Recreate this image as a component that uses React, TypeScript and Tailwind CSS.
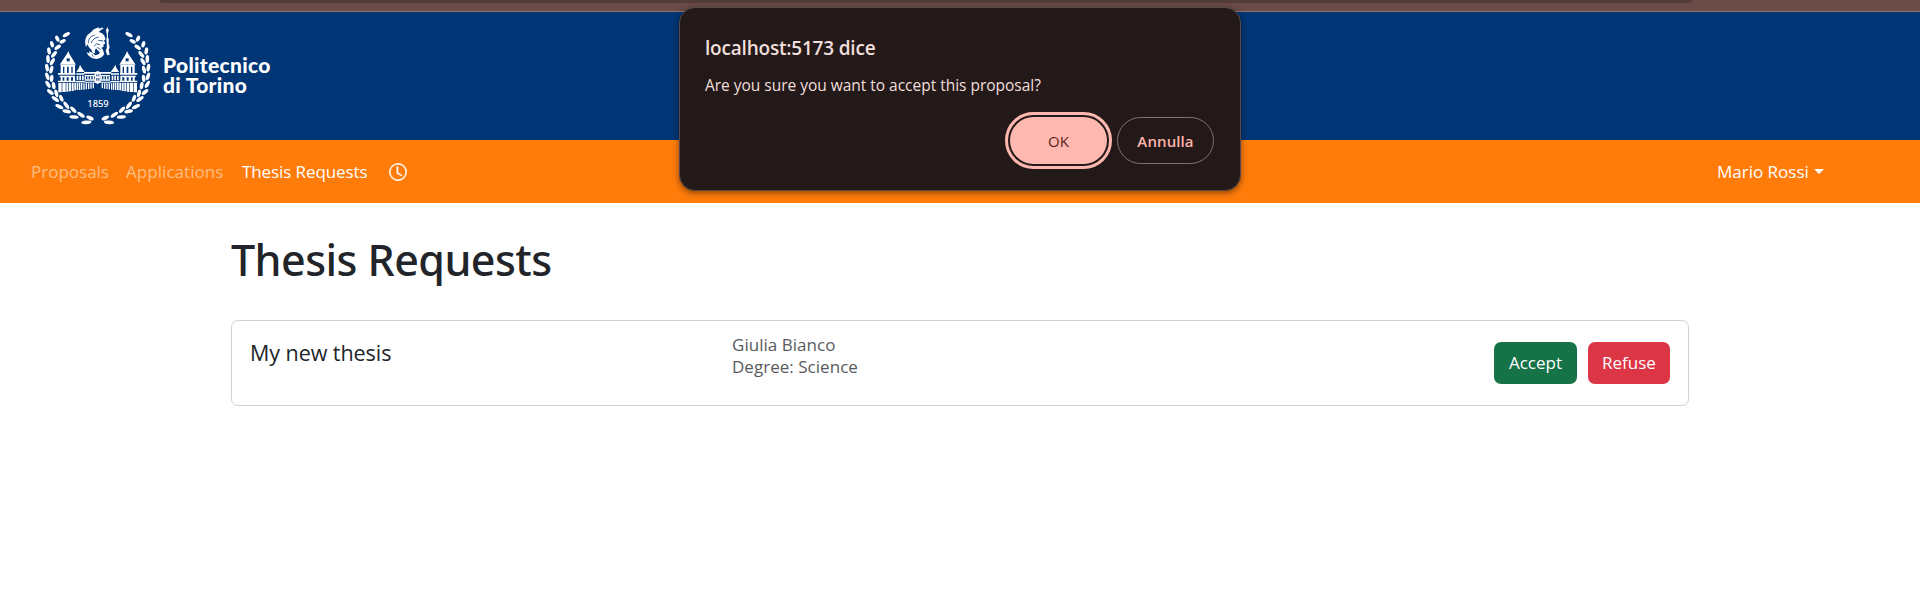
import React from "react";

type Leaf = [number, number, number, number];

// x, y, length, rotation in degrees; the right half of the wreath mirrors the left one
const leaves: Leaf[] = [
  [109, 59, 12, -30], [82, 71, 10, 65], [98, 79, 10, -28], [66, 88, 10, 75], [83, 97, 11, -35],
  [57, 108, 11, 80], [72, 118, 12, -50], [54, 132, 12, 88], [67, 140, 12, -60],
  [51, 158, 12, 80], [64, 164, 12, -75], [52, 184, 12, 72], [65, 190, 11, -85],
  [54, 208, 12, 60], [71, 212, 11, 80], [61, 231, 12, 40], [79, 235, 12, 75],
  [76, 252, 13, 35], [94, 250, 11, 68], [88, 275, 13, 25], [109, 271, 13, 55],
  [110, 289, 13, 12], [130, 284, 12, 45], [132, 306, 14, 5], [153, 299, 13, 35],
  [169, 322, 15, -5], [180, 309, 12, 25],
];

function Wreath() {
  return (
    <g>
      {leaves.map(([x, y, l, r]) => (
        <ellipse key={`${x}-${y}`} cx={x} cy={y} rx={l} ry={5.4} transform={`rotate(${r} ${x} ${y})`} />
      ))}
    </g>
  );
}

function Tower() {
  return (
    <g>
      <path d="M115 108l3 8 20 33H89l22-33z" />
      <path d="M92 150h43v5H92zM92 155h7v22h-7zM103 155h8v22h-8zM116 155h8v22h-8zM128 155h7v22h-7zM84 174h52v5H84zM89 182h46v5H89zM92 187h6v10h-6zM103 187h7v10h-7zM116 187h7v10h-7zM129 187h6v10h-6zM84 197h53v4H84z" />
      <path d="M85 203h10v29h-10zM97 203h10v28h-10zM109 203h6v27h-6zM117 203h6v26h-6zM125 203h6v25h-6zM133 203h5v23h-5zM140 203h5v22h-5zM147 203h4v22h-4zM153 203h4v21h-4z" />
      <path d="M110 130h9v9h-9z" fill="#003576" />
      <path d="M150 149l5 9 9 13h-25l8-13zM139 175h24v4h-24zM140 182h5v14h-5zM148 182h5v14h-5zM156 182h5v14h-5zM138 198h26v4h-26z" />
    </g>
  );
}

function Minerva() {
  return (
    <g>
      <path d="M168 96C163 80 166 66 175 58C181 53 185 52 188 46C193 41 200 39 208 37L206 42L214 38L222 39L213 45L206 51L215 54C222 58 226 66 226 74L222 76L226 86L221 88L220 96L214 98L219 104L221 115L212 121L209 112L203 106L198 100L194 108L196 115L188 114L184 104L178 98L172 88Z" />
      <path d="M175 84C175 72 181 64 194 60M184 84C187 74 194 68 206 66M205 76L220 78M192 94L200 86L210 90M202 97L212 104" fill="none" stroke="#003576" strokeWidth="2.4" />
      <path d="M169 112L179 115L177 108L188 114L196 121L206 118L213 109L219 108L223 118L215 127L202 132L187 130L176 122Z" />
      <path d="M186 117L190 126M200 108L203 117" fill="none" stroke="#003576" strokeWidth="2" />
      <path d="M232 36L236 46L234 55H230L228 46Z" />
      <path d="M230.500 50h3.500v62h-3.500zM229 70h7v17l3 9-3 9 3 14-7 2-5-13 4-11z" />
    </g>
  );
}

function Emblem() {
  return (
    <svg viewBox="0 0 390 360" className="h-[120px] w-[130px] shrink-0" fill="#fff">
      <Wreath />
      <Tower />
      <g transform="matrix(-1 0 0 1 406 0)">
        <Wreath />
        <Tower />
      </g>
      <path d="M162 171h82v5h-82zM164 180h76v4h-76zM164 193h76v4h-76zM163 200h80v3h-80z" />
      <path d="M164 184h4v9h-4zM172 184h4v9h-4zM180 184h4v9h-4zM188 184h4v9h-4zM212 184h4v9h-4zM220 184h4v9h-4zM228 184h4v9h-4zM236 184h4v9h-4z" />
      <path d="M160 205h4v19h-4zM167 205h4v18h-4zM174 205h4v17h-4zM181 205h4v16h-4zM188 205h4v15h-4zM215 205h4v15h-4zM222 205h4v16h-4zM229 205h4v17h-4zM236 205h4v18h-4zM243 205h4v19h-4z" />
      <path d="M194 172l9-4 9 4v28l-9 8-9-8z" />
      <path d="M199 178h3v6h-3zM205 178h3v6h-3zM199 189h3v8h-3zM205 189h3v8h-3z" fill="#003576" />
      <Minerva />
      <text x="204" y="276" textAnchor="middle" fontSize="28" className="font-['Noto_Sans'] font-medium">1859</text>
    </svg>
  );
}

function ClockIcon() {
  return (
    <svg viewBox="0 0 16 16" className="h-[18px] w-[18px]" fill="#fff" stroke="#fff" strokeWidth=".5">
      <path d="M8 3.5a.5.5 0 0 0-1 0V9a.5.5 0 0 0 .252.434l3.5 2a.5.5 0 0 0 .496-.868L8 8.71z" />
      <path d="M8 15.7A7.7 7.7 0 1 0 8 .3a7.7 7.7 0 0 0 0 15.400m6.900-7.700A6.900 6.900 0 1 1 1.100 8a6.900 6.900 0 0 1 13.800 0" />
    </svg>
  );
}

function ConfirmDialog() {
  return (
    <div role="dialog" className="absolute top-[7px] left-[679px] flex h-[184px] w-[562px] flex-col rounded-[16px] border border-[#594a47] bg-[#231919] pr-[26px] pl-[25px] text-[#f1dfdc] shadow-[0_2px_6px_rgba(0,0,0,0.45)]">
      <h2 className="mt-[26px] text-[19px] leading-[28px] font-semibold tracking-[-0.2px] whitespace-nowrap">localhost:5173 dice</h2>
      <p className="mt-[12px] text-[15.5px] leading-[22px] tracking-[-0.02px] whitespace-nowrap">Are you sure you want to accept this proposal?</p>
      <div className="mt-[21px] flex justify-end gap-[10px] text-[15px]">
        <button className="h-[47px] w-[97px] rounded-full bg-[#ffb8af] pt-px text-[#5c1f1a] outline-3 outline-offset-2 outline-[#ffb8af]">OK</button>
        <button className="h-[47px] w-[97px] rounded-full border border-[#85706d] pt-px font-semibold tracking-[0.1px] text-[#ffb4aa]">Annulla</button>
      </div>
    </div>
  );
}

export default function App() {
  return (
    <div className="relative h-[593px] w-[1920px] overflow-hidden bg-white font-['Open_Sans',sans-serif] text-[#212529]">
      <div className="h-[12px] border-b border-[#94736f] bg-[#6a4b47] pl-[160px]">
        <div className="h-[3px] w-[1532px] rounded-b-[8px] bg-[#523d3a]" />
      </div>

      <header className="flex h-[128px] bg-[#003576] pt-[3px] pl-[30px]">
        <Emblem />
        <div className="mt-[40px] ml-[3px] font-['Lato'] text-[21px] leading-[19.5px] font-black tracking-[0.3px] whitespace-pre text-white">
          {"Politecnico\ndi Torino"}
        </div>
      </header>

      <nav className="flex h-[63px] items-center bg-[#ff7c0a] pl-[31px] text-[17px] leading-[26px] whitespace-nowrap text-white">
        <a className="w-[95px] text-[#ffbe84]">Proposals</a>
        <a className="w-[116px] tracking-[0.05px] text-[#ffbe84]">Applications</a>
        <a className="w-[147px] tracking-[-0.1px]">Thesis Requests</a>
        <ClockIcon />
        <div className="ml-auto flex w-[203px] items-center">
          <span>Mario Rossi</span>
          <span className="ml-[5px] border-x-[5px] border-t-[5px] border-x-transparent border-t-white" />
        </div>
      </nav>

      <main className="mx-[231px] flex flex-col">
        <h1 className="mt-[30px] font-['Noto_Sans'] text-[43px] leading-[54px] font-medium tracking-[-0.55px] whitespace-nowrap">Thesis Requests</h1>
        <section className="mt-[33px] flex h-[86px] rounded-[7px] border border-[#d1d2d3]">
          <h2 className="mt-[19px] w-[500px] pl-[18px] text-[21.5px] leading-[26px] tracking-[-0.05px] whitespace-nowrap">My new thesis</h2>
          <div className="mt-[13px] text-[17px] leading-[22px] tracking-[0.03px] whitespace-nowrap text-[#585b5e]">
            <div>Giulia Bianco</div>
            <div>Degree: Science</div>
          </div>
          <div className="mt-[21px] mr-[18px] ml-auto flex gap-[11px] text-[17px] text-white">
            <button className="h-[42px] w-[83px] rounded-[7px] bg-[#157347]">Accept</button>
            <button className="h-[42px] w-[82px] rounded-[7px] bg-[#dc3545]">Refuse</button>
          </div>
        </section>
      </main>

      <ConfirmDialog />
    </div>
  );
}
